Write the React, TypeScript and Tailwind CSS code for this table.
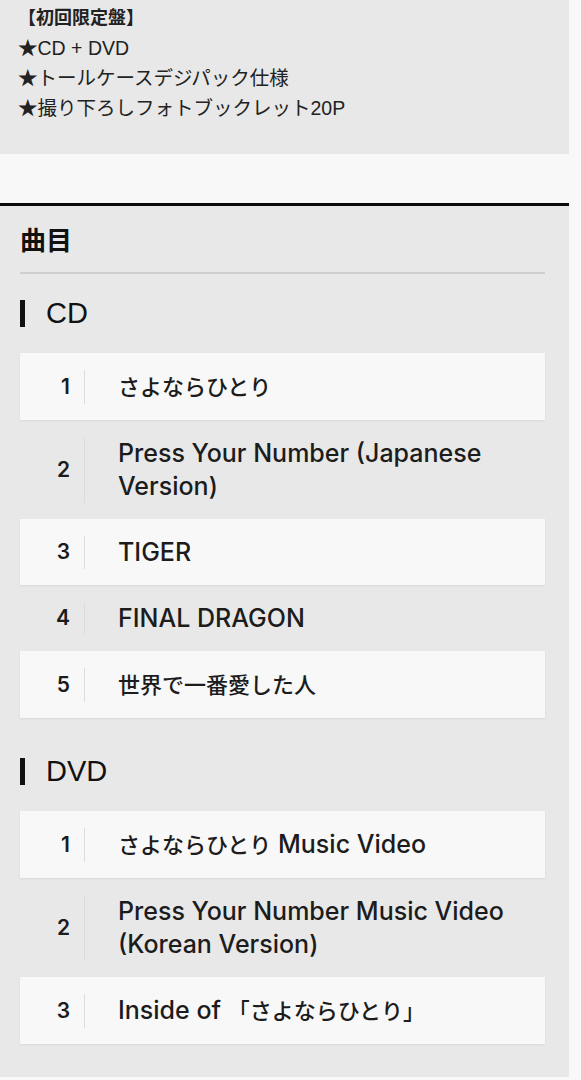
import React from "react";

type Track = { no: number; title: string };

const cdTracks: Track[] = [
    { no: 1, title: "さよならひとり" },
    { no: 2, title: "Press Your Number (Japanese Version)" },
    { no: 3, title: "TIGER" },
    { no: 4, title: "FINAL DRAGON" },
    { no: 5, title: "世界で一番愛した人" },
];

const dvdTracks: Track[] = [
    { no: 1, title: "さよならひとり Music Video" },
    { no: 2, title: "Press Your Number Music Video (Korean Version)" },
    { no: 3, title: "Inside of 「さよならひとり」" },
];

const font = { fontFamily: '"Liberation Sans", "Noto Sans CJK JP", sans-serif' };
const listFont = { fontFamily: 'Inter, "Noto Sans CJK JP", sans-serif' };

// kana / kanji are set a bit smaller than the latin around them
function Mixed({ text }: { text: string }) {
    const parts = text.split(/([\u3000-\u30ff\u4e00-\u9fff\uff00-\uffef]+)/);
    return (
        <>
            {parts.map((p, i) =>
                /[\u3000-\u30ff\u4e00-\u9fff\uff00-\uffef]/.test(p) ? (
                    <span key={i} className="text-[22px]">{p}</span>
                ) : (
                    <span key={i}>{p}</span>
                )
            )}
        </>
    );
}

function TrackRow({ track, odd }: { track: Track; odd: boolean }) {
    return (
        <li className={`flex items-stretch py-[16.5px] ${odd ? "bg-[#f8f8f8] shadow-[0_1px_2px_rgba(0,0,0,0.07)]" : ""}`} style={listFont}>
            <div className="w-[64px] shrink-0 pr-[14px] flex items-center justify-end text-[21px] font-semibold text-[#1c1c1c]">
                {track.no}
            </div>
            <div className="flex-1 border-l border-[#dcdcdc] pl-[33px] pr-[15px] text-[25px] leading-[33px] font-medium text-[#1c1c1c]">
                <Mixed text={track.title} />
            </div>
        </li>
    );
}

function Section({ label, tracks, first }: { label: string; tracks: Track[]; first?: boolean }) {
    return (
        <div className={first ? "mt-[26px]" : "mt-[40px]"}>
            <h3 className="border-l-[5px] border-[#111] pl-[21px] text-[29px] leading-[27px] text-[#111]">{label}</h3>
            <ul className="mt-[26px]">
                {tracks.map((t, i) => (
                    <TrackRow key={label + t.no} track={t} odd={i % 2 === 0} />
                ))}
            </ul>
        </div>
    );
}

export default function App() {
    return (
        <div className="min-h-screen w-full bg-[#f8f8f8]" style={font}>
            <div className="w-[569px]">
                <div className="h-[154px] bg-[#e8e8e8] pt-[3px] pl-[18px] leading-[30px] text-[#222]">
                    <p className="text-[18px] font-bold">【初回限定盤】</p>
                    <p className="text-[19.5px]">★CD + DVD</p>
                    <p className="text-[19.5px]">★トールケースデジパック仕様</p>
                    <p className="text-[19.5px]">★撮り下ろしフォトブックレット20P</p>
                </div>
                <div className="h-[49px]" />
                <div className="h-[3px] bg-[#0a0a0a]" />
                <div className="bg-[#e8e8e8] pl-[20px] pr-[24px] pt-[18px] pb-[33px]">
                    <h2 className="border-b-2 border-[#cfcfcf] pb-[14px] text-[26px] leading-[34px] font-bold text-[#111]">曲目</h2>
                    <Section label="CD" tracks={cdTracks} first />
                    <Section label="DVD" tracks={dvdTracks} />
                </div>
            </div>
        </div>
    );
}
